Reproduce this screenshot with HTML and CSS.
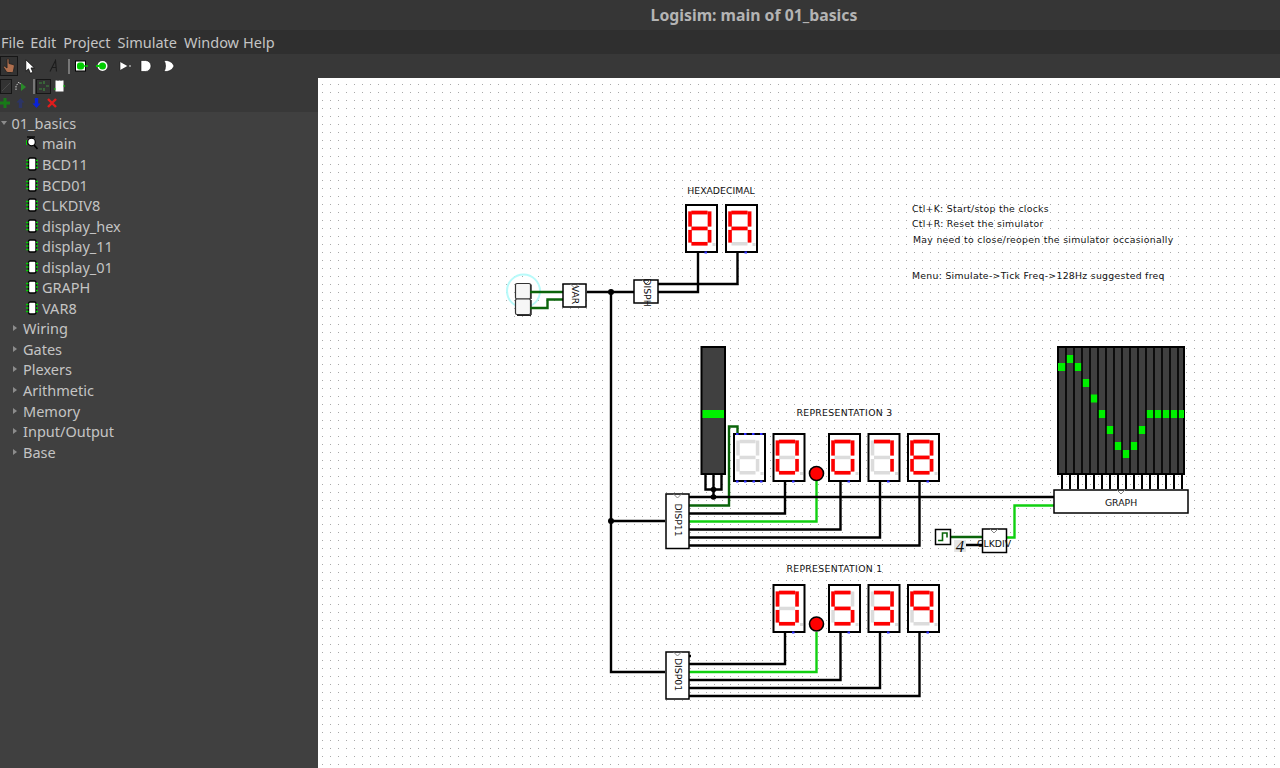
FILE: index.html
```html
<!DOCTYPE html>
<html lang="en">

<head>
    <meta charset="UTF-8">
    <title>Logisim: main of 01_basics</title>
    <link rel="stylesheet" href="styles.css">
</head>

<body>
    <svg class="sprite">
        <symbol id="chip" viewBox="0 0 12 14">
            <rect x="2.500" y="1" width="7.500" height="12" rx="1.500" fill="#fff" stroke="#000" stroke-width="1.400"/>
            <path d="M0 3.500h2.500M0 7h2.500M0 10.500h2.500M10 3.500h2M10 7h2M10 10.500h2" stroke="#0c0" stroke-width="1.400"/>
        </symbol>
    </svg>

    <header class="title">Logisim: main of 01_basics</header>

    <nav class="menu">
        <span class="menu-first">File</span>
        <span>Edit</span>
        <span>Project</span>
        <span>Simulate</span>
        <span>Window</span>
        <span class="menu-last">Help</span>
    </nav>

    <div class="toolbar main-tools">
        <div class="pressed hand-box">
            <svg width="12" height="16" viewBox="0 0 12 16">
                <path d="M4 1.500c0-1 2-1 2 0v4l4 1c1 .3 1.500 1 1.300 2l-.8 4.500c-.2 1-.8 1.500-1.800 1.500H5c-.8 0-1.300-.4-1.700-1L.6 9.500c-.6-1 .7-1.900 1.500-1L4 10z" fill="#b0704f" stroke="#222" stroke-width=".9"/>
            </svg>
        </div>
        <svg class="ml-7" width="10" height="15" viewBox="0 0 10 15">
            <path d="M.8 .8v11.400l2.700-2.400 1.900 4.500 2.500-1.100-1.900-4.300h3.400z" fill="#fff" stroke="#000" stroke-width=".7"/>
        </svg>
        <svg class="ml-14" width="10" height="14" viewBox="0 0 10 14">
            <path d="M1 12.500 6.500 1.500 7.500 12.500M3 8.500h4.500" fill="none" stroke="#1c1c1c" stroke-width="1.100"/>
        </svg>
        <span class="sep ml-9"></span>
        <svg class="ml-4" width="14" height="12" viewBox="0 0 14 12">
            <rect x="1.500" y="1" width="10" height="10" fill="#fff" stroke="#000"/>
            <rect x="3" y="2.500" width="7" height="7" rx="2.500" fill="#0c0"/>
            <path d="M10 6h4" stroke="#0c0" stroke-width="1.500"/>
        </svg>
        <svg class="ml-7" width="14" height="12" viewBox="0 0 14 12">
            <circle cx="7.500" cy="6" r="5" fill="#fff"/>
            <circle cx="7.500" cy="6" r="3.500" fill="#0c0"/>
            <path d="M1 6h3" stroke="#0c0" stroke-width="2"/>
        </svg>
        <svg class="ml-9" width="14" height="12" viewBox="0 0 14 12">
            <path d="M2 1.500v9L10 6z" fill="#fff" stroke="#111" stroke-width=".6"/>
            <path d="M11 6h2" stroke="#aaa" stroke-width="1.500"/>
        </svg>
        <svg class="ml-7" width="14" height="12" viewBox="0 0 14 12">
            <path d="M2 .5h4.500a5.500 5.500 0 0 1 0 11H2z" fill="#fff" stroke="#111" stroke-width=".6"/>
        </svg>
        <svg class="ml-9" width="14" height="12" viewBox="0 0 14 12">
            <path d="M2 .5h3c3 .5 6 2.500 7 5.500-1 3-4 5-7 5.500H2c2-3 2-8 0-11z" fill="#fff" stroke="#111" stroke-width=".6"/>
        </svg>
    </div>

    <div class="workspace">
        <aside class="sidebar">
            <div class="toolbar sub-tools">
                <div class="pressed wire-box">
                    <svg width="10" height="12" viewBox="0 0 10 12"><path d="M1 11 9 3" stroke="#4a4a4a"/></svg>
                </div>
                <svg class="ml-3" width="12" height="14" viewBox="0 0 12 14">
                    <path d="M1 11V7l3-4 3 4" fill="none" stroke="#ccc" stroke-dasharray="1.500 1"/>
                    <path d="M6 4v8l5-4z" fill="#2a8a2a"/>
                </svg>
                <span class="sep ml-6"></span>
                <div class="pressed gate-box ml-1">
                    <svg width="12" height="12" viewBox="0 0 12 12"><path d="M1 3h3M1 9h3M8 6h3M6 1v3M6 8v3" stroke="#3f8a3f" stroke-width="1.200"/></svg>
                </div>
                <svg class="ml-3" width="11" height="12" viewBox="0 0 11 12">
                    <rect x="1.500" y=".5" width="8" height="11" fill="#fff"/>
                    <path d="M3.500 .5h1M6.500 .5h1" stroke="#555"/>
                    <path d="M0 9h1.500M9.500 6h1.500" stroke="#0c0" stroke-width="1.300"/>
                </svg>
            </div>
            <div class="toolbar edit-tools">
                <svg width="10" height="10" viewBox="0 0 10 10"><path d="M3.500 0h3v3.500H10v3H6.500V10h-3V6.500H0v-3h3.500z" fill="#187a18"/></svg>
                <svg class="ml-6" width="9" height="10" viewBox="0 0 9 10"><path d="M4.500 0 8.500 4.500H6.200V10H2.800V4.500H.5z" fill="#2c3566"/></svg>
                <svg class="ml-7" width="9" height="10" viewBox="0 0 9 10"><path d="M2.800 0h3.400v5.500h2.300L4.500 10 .5 5.500h2.300z" fill="#0a22d8"/></svg>
                <svg class="ml-6" width="10" height="10" viewBox="0 0 10 10"><path d="M1 1l8 8M9 1 1 9" stroke="#e21c1c" stroke-width="2.400"/></svg>
            </div>

            <ul class="tree">
                <li class="project"><i class="arrow-open"></i>01_basics</li>
                <li class="circuit">
                    <svg class="tree-icon" width="12" height="14" viewBox="0 0 12 14">
                        <circle cx="5.500" cy="6" r="3.800" fill="#fff" stroke="#000" stroke-width="1.200"/>
                        <path d="M1 1h8" stroke="#000" stroke-width="1.200"/>
                        <path d="M0.500 4v5" stroke="#0c0"/>
                        <path d="M8 9l3.500 4" stroke="#000" stroke-width="1.800"/>
                    </svg>main
                </li>
                <li class="circuit"><svg class="tree-icon" width="12" height="14"><use href="#chip"/></svg>BCD11</li>
                <li class="circuit"><svg class="tree-icon" width="12" height="14"><use href="#chip"/></svg>BCD01</li>
                <li class="circuit"><svg class="tree-icon" width="12" height="14"><use href="#chip"/></svg>CLKDIV8</li>
                <li class="circuit"><svg class="tree-icon" width="12" height="14"><use href="#chip"/></svg>display_hex</li>
                <li class="circuit"><svg class="tree-icon" width="12" height="14"><use href="#chip"/></svg>display_11</li>
                <li class="circuit"><svg class="tree-icon" width="12" height="14"><use href="#chip"/></svg>display_01</li>
                <li class="circuit"><svg class="tree-icon" width="12" height="14"><use href="#chip"/></svg>GRAPH</li>
                <li class="circuit"><svg class="tree-icon" width="12" height="14"><use href="#chip"/></svg>VAR8</li>
                <li class="library"><i class="arrow-closed"></i>Wiring</li>
                <li class="library"><i class="arrow-closed"></i>Gates</li>
                <li class="library"><i class="arrow-closed"></i>Plexers</li>
                <li class="library"><i class="arrow-closed"></i>Arithmetic</li>
                <li class="library"><i class="arrow-closed"></i>Memory</li>
                <li class="library"><i class="arrow-closed"></i>Input/Output</li>
                <li class="library"><i class="arrow-closed"></i>Base</li>
            </ul>
        </aside>

        <div class="canvas">
            <!-- viewBox keeps the circuit in screen coordinates -->
            <svg class="circuit-board" viewBox="318 78 962 690" width="962" height="690">
                <defs>
                    <pattern id="dots" x="2" y="4" width="8" height="8" patternUnits="userSpaceOnUse">
                        <rect width="1" height="1" fill="#a8a8a8"/>
                    </pattern>
                    <rect id="sa" x="6.500" y="6.800" width="16" height="3.500"/>
                    <rect id="sb" x="22.800" y="7.500" width="3.500" height="15"/>
                    <rect id="sc" x="22.800" y="26" width="3.500" height="12.500"/>
                    <rect id="sd" x="6.500" y="38" width="16" height="3.500"/>
                    <rect id="se" x="3.300" y="26" width="3.500" height="12.500"/>
                    <rect id="sf" x="3.300" y="7.500" width="3.500" height="15"/>
                    <rect id="sg" x="6.500" y="22.700" width="16" height="3.500"/>
                    <g id="disp">
                        <rect class="disp-frame" x="1" y="1" width="31" height="47"/>
                        <g class="seg-off">
                            <use href="#sa"/><use href="#sb"/><use href="#sc"/><use href="#sd"/>
                            <use href="#se"/><use href="#sf"/><use href="#sg"/>
                            <rect x="27.500" y="39" width="3" height="3"/>
                        </g>
                        <rect class="pin" x="19.500" y="47.500" width="2.500" height="2"/>
                    </g>
                    <g id="d0" class="seg-on"><use href="#sa"/><use href="#sb"/><use href="#sc"/><use href="#sd"/><use href="#se"/><use href="#sf"/></g>
                    <g id="d3" class="seg-on"><use href="#sa"/><use href="#sb"/><use href="#sc"/><use href="#sd"/><use href="#sg"/></g>
                    <g id="d5" class="seg-on"><use href="#sa"/><use href="#sf"/><use href="#sg"/><use href="#sc"/><use href="#sd"/></g>
                    <g id="d7" class="seg-on"><use href="#sa"/><use href="#sb"/><use href="#sc"/></g>
                    <g id="d8" class="seg-on"><use href="#d0"/><use href="#sg"/></g>
                    <g id="d9" class="seg-on"><use href="#sa"/><use href="#sb"/><use href="#sc"/><use href="#sf"/><use href="#sg"/></g>
                    <g id="dA" class="seg-on"><use href="#sa"/><use href="#sb"/><use href="#sc"/><use href="#se"/><use href="#sf"/><use href="#sg"/></g>
                </defs>

                <rect x="318" y="78" width="962" height="690" fill="#fff"/>
                <rect x="318" y="78" width="962" height="690" fill="url(#dots)"/>

                <!-- input switches -->
                <circle class="poke" cx="523.500" cy="291" r="16.500"/>
                <path class="switch-shadow" d="M531 284.500V299M531 300V315M517 315.300H531"/>
                <rect class="switch" x="515.500" y="283.500" width="15" height="15.500" rx="1.500"/>
                <rect class="switch" x="515.500" y="299" width="15" height="15.500" rx="1.500"/>

                <!-- wires -->
                <path class="wire off" d="M530 292H563M530 308H547.500V299.500H563M951 537H982M689 505.500H729V426.500H737.500V434"/>
                <path class="wire on" d="M689 521.500H816.500V481M689 672H816.500V632M1054 505.500H1014.500V537.500H1006"/>
                <path class="wire" d="M587 292H634M611 292V672H665M611 521H665M658 284H737.500V252M658 292H698V252"/>
                <path class="wire" d="M689 497H1054M689 513.500H785V481M689 529.500H840.500V481M689 537.500H880V481M689 545.500H919.500V481"/>
                <path class="wire" d="M689 664H785V632M689 680H840.500V632M689 688H880V632M689 696H919.500V632M689 656H691M966 545H982"/>
                <path class="wire" d="M705.500 474V489.500H721.500V474M713.500 474V497"/>
                <path class="wire-thin" d="M1062 474V489M1070 474V489M1078 474V489M1086 474V489M1094 474V489M1102 474V489M1110 474V489M1118 474V489M1126 474V489M1134 474V489M1142 474V489M1150 474V489M1158 474V489M1166 474V489M1174 474V489M1182 474V489"/>
                <circle cx="611" cy="292" r="3"/>
                <circle cx="611" cy="521" r="3"/>
                <circle cx="713.500" cy="489.500" r="2.800"/>
                <circle cx="713.500" cy="497" r="2.800"/>

                <!-- subcircuit boxes -->
                <rect class="box" x="563" y="284" width="23" height="23"/>
                <rect class="box" x="634" y="280" width="24" height="23"/>
                <rect class="box" x="666" y="494" width="23" height="54.500"/>
                <rect class="box" x="666" y="652" width="23" height="47"/>
                <rect class="box" x="1054" y="490" width="134" height="23"/>
                <rect class="box" x="982.500" y="529" width="24" height="23.500"/>
                <path class="clock-mark" d="M673.500 494 677.500 498 681.500 494M673.500 652 677.500 656 681.500 652M1117 490 1121 494 1125 490M990 529 994 533 998 529M642 280 646 284 650 280M570.500 284 574.500 288 578.500 284"/>

                <text class="label v-label" transform="translate(574 295) rotate(90)">VAR</text>
                <text class="label v-label" transform="translate(646 292.500) rotate(90)">DISPH</text>
                <text class="label v-label" transform="translate(677 520) rotate(90)">DISP11</text>
                <text class="label v-label" transform="translate(677 674.500) rotate(90)">DISP01</text>
                <text class="label mid" x="1121" y="506">GRAPH</text>
                <text class="label mid" x="994" y="546.500">CLKDIV</text>

                <text class="label mid" x="721" y="194">HEXADECIMAL</text>
                <text class="label mid spaced" x="844.500" y="416">REPRESENTATION 3</text>
                <text class="label mid spaced" x="834.500" y="572">REPRESENTATION 1</text>

                <text class="label spaced" x="912" y="211.500">Ctl+K: Start/stop the clocks</text>
                <text class="label spaced" x="912" y="226.500">Ctl+R: Reset the simulator</text>
                <text class="label spaced" x="913" y="242.500">May need to close/reopen the simulator occasionally</text>
                <text class="label spaced" x="912" y="278.500">Menu: Simulate-&gt;Tick Freq-&gt;128Hz suggested freq</text>

                <!-- hex displays -->
                <g transform="translate(685 204)"><use href="#disp"/><use href="#d8"/></g>
                <g transform="translate(725 204)"><use href="#disp"/><use href="#dA"/></g>

                <!-- representation 3 -->
                <g transform="translate(733 433)">
                    <use href="#disp"/>
                    <path class="pin" d="M3 0h2.500v2H3zM11 0h2.500v2H11zM19 0h2.500v2H19zM27 0h2.500v2H27zM3 47.500h2.500v2H3zM11 47.500h2.500v2H11zM27 47.500h2.500v2H27z"/>
                </g>
                <g transform="translate(772.500 433)"><use href="#disp"/><use href="#d0"/></g>
                <g transform="translate(828 433)"><use href="#disp"/><use href="#d0"/></g>
                <g transform="translate(867.500 433)"><use href="#disp"/><use href="#d7"/></g>
                <g transform="translate(907 433)"><use href="#disp"/><use href="#d8"/></g>
                <circle class="led" cx="816.500" cy="473.500" r="7"/>

                <!-- representation 1 -->
                <g transform="translate(772.500 584)"><use href="#disp"/><use href="#d0"/></g>
                <g transform="translate(828 584)"><use href="#disp"/><use href="#d5"/></g>
                <g transform="translate(867.500 584)"><use href="#disp"/><use href="#d3"/></g>
                <g transform="translate(907 584)"><use href="#disp"/><use href="#d9"/></g>
                <circle class="led" cx="816.500" cy="624" r="7"/>

                <!-- level bar -->
                <rect class="matrix" x="701.500" y="347" width="23.500" height="127"/>
                <rect class="lit" x="702.500" y="410" width="21.500" height="8"/>

                <!-- graph -->
                <rect class="matrix" x="1058" y="347" width="126" height="127"/>
                <path class="lit" d="M1058 363h8v8h-8zM1066 355h8v8h-8zM1074 363h8v8h-8zM1082 379h8v8h-8zM1090 394.500h8v8h-8zM1098 410h8v8h-8zM1106 426h8v8h-8zM1114 442h8v8h-8zM1122 450h8v8h-8zM1130 442h8v8h-8zM1138 426h8v8h-8zM1146 410h8v8h-8zM1154 410h8v8h-8zM1162 410h8v8h-8zM1170 410h8v8h-8zM1178 410h6v8h-6z"/>
                <path class="grid-line" d="M1066 347V474M1074 347V474M1082 347V474M1090 347V474M1098 347V474M1106 347V474M1114 347V474M1122 347V474M1130 347V474M1138 347V474M1146 347V474M1154 347V474M1162 347V474M1170 347V474M1178 347V474"/>

                <!-- clock and constant -->
                <rect class="box" x="935.500" y="529.500" width="15" height="15"/>
                <path class="clock-wave" d="M938 540.500H942.500V533H947V537.500"/>
                <rect class="const-bg" x="954" y="540" width="12" height="12"/>
                <text class="const" x="960" y="552">4</text>
            </svg>
        </div>
    </div>
</body>

</html>
```

FILE: styles.css
```css
html,
body {
    margin: 0;
    padding: 0;
    height: 100%;
    overflow: hidden;
}

body {
    font-family: "Noto Sans", sans-serif;
    background-color: #404040;
    color: #c4c4c4;
    display: flex;
    flex-direction: column;
    height: 768px;
}

.sprite {
    display: none;
}

.title {
    height: 30px;
    line-height: 30px;
    background-color: #363636;
    text-align: center;
    font-size: 15.800px;
    font-weight: 700;
    color: #b4b4b4;
    padding-left: 228px;
}

.menu {
    height: 24px;
    line-height: 24px;
    background-color: #2f2f2f;
    display: flex;
    gap: 7px;
    padding-left: 1px;
    font-size: 14.500px;
}

.menu-first {
    margin-right: -1px;
}

.menu-last {
    margin-left: -3px;
}

.toolbar {
    display: flex;
    align-items: center;
    background-color: #383838;
}

.main-tools {
    height: 24px;
}

.sub-tools {
    height: 16px;
}

.edit-tools {
    height: 17px;
    padding-bottom: 1px;
}

.pressed {
    display: flex;
    align-items: center;
    justify-content: center;
    box-sizing: border-box;
    border: 1px solid #161616;
    background-color: #333;
}

.hand-box {
    width: 18px;
    height: 20px;
}

.wire-box {
    width: 12px;
    height: 15px;
}

.gate-box {
    width: 15px;
    height: 15px;
}

.sep {
    width: 2px;
    height: 15px;
    background-color: #777;
}

.ml-1 { margin-left: 1px; }
.ml-3 { margin-left: 3px; }
.ml-4 { margin-left: 4px; }
.ml-6 { margin-left: 6px; }
.ml-7 { margin-left: 7px; }
.ml-9 { margin-left: 9px; }
.ml-14 { margin-left: 14px; }

.workspace {
    flex: 1;
    display: flex;
    min-height: 0;
}

.sidebar {
    width: 318px;
    flex-shrink: 0;
    display: flex;
    flex-direction: column;
}

.tree {
    list-style: none;
    margin: 0;
    padding: 0.600px 0 0;
    font-size: 14.500px;
}

.tree li {
    height: 20.560px;
    line-height: 20px;
    display: flex;
    align-items: center;
}

.project {
    padding-left: 1px;
}

.circuit {
    padding-left: 26px;
}

.library {
    padding-left: 13px;
}

.tree-icon {
    margin-right: 4px;
}

.arrow-open {
    width: 0;
    height: 0;
    border-left: 3.500px solid transparent;
    border-right: 3.500px solid transparent;
    border-top: 4px solid #8c8c8c;
    margin-right: 4.500px;
}

.arrow-closed {
    width: 0;
    height: 0;
    border-top: 3.500px solid transparent;
    border-bottom: 3.500px solid transparent;
    border-left: 4px solid #8c8c8c;
    margin-right: 6px;
}

.canvas {
    flex: 1;
    min-width: 0;
    background-color: #fff;
}

.circuit-board {
    display: block;
}

/* Circuit drawing */
.wire {
    fill: none;
    stroke: #000;
    stroke-width: 2.400;
}

.wire.off {
    stroke: #0a640a;
}

.wire.on {
    stroke: #10d010;
}

.wire-thin {
    fill: none;
    stroke: #000;
    stroke-width: 2;
}

.box {
    fill: #fff;
    stroke: #000;
    stroke-width: 1.500;
}

.clock-mark {
    fill: none;
    stroke: #888;
}

.label {
    font-family: "DejaVu Sans", sans-serif;
    font-size: 9.300px;
    fill: #111;
}

.spaced {
    letter-spacing: 0.300px;
}

.mid,
.v-label {
    text-anchor: middle;
}

.v-label {
    dominant-baseline: middle;
}

.disp-frame {
    fill: #fff;
    stroke: #000;
    stroke-width: 2;
}

.seg-off {
    fill: #dcdcdc;
}

.seg-on {
    fill: #f00;
    stroke: rgba(255, 0, 0, 0.3);
    stroke-width: 0.500;
}

.pin {
    fill: #2a2aff;
}

.led {
    fill: #f00;
    stroke: #000;
    stroke-width: 1.600;
}

.matrix {
    fill: #404040;
    stroke: #000;
    stroke-width: 2;
}

.grid-line {
    stroke: #000;
    stroke-width: 1.600;
}

.lit {
    fill: #00f000;
}

.switch {
    fill: #f6f6f6;
    stroke: #333;
    stroke-width: 1.200;
}

.switch-shadow {
    fill: none;
    stroke: #222;
    stroke-width: 1.400;
}

.poke {
    fill: none;
    stroke: #b8fafa;
    stroke-width: 2;
}

.clock-wave {
    fill: none;
    stroke: #0a640a;
    stroke-width: 1.600;
}

.const-bg {
    fill: #e6e6e6;
}

.const {
    font-family: "Liberation Serif", serif;
    font-size: 17px;
    font-style: italic;
    text-anchor: middle;
    fill: #111;
}
```
